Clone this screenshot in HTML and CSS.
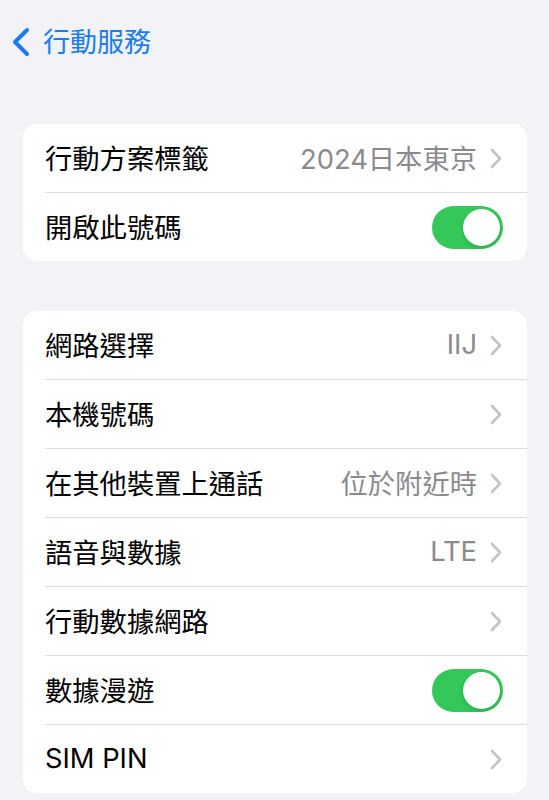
FILE: index.html
```html
<!DOCTYPE html>
<html lang="zh-Hant">
<head>
    <meta charset="UTF-8">
    <title>行動服務</title>
    <link rel="stylesheet" href="styles.css">
</head>
<body>

<div class="nav-bar">
    <a class="back-link" href="#">
        <svg class="back-icon" width="20" height="30" viewBox="0 0 20 30">
            <path d="M16 3 L4 15 L16 27" fill="none" stroke="#1a7cf5" stroke-width="4" stroke-linecap="round" stroke-linejoin="round"/>
        </svg>
        <span>行動服務</span>
    </a>
</div>

<div class="group">
    <div class="row">
        <span class="label">行動方案標籤</span>
        <span class="value">2024日本東京</span>
        <svg class="chevron" width="12" height="21" viewBox="0 0 12 21"><path d="M2 2 L10 10.5 L2 19" fill="none" stroke="#c4c4c7" stroke-width="2.6" stroke-linecap="round" stroke-linejoin="round"/></svg>
    </div>
    <div class="row">
        <span class="label">開啟此號碼</span>
        <span class="toggle on"><span class="knob"></span></span>
    </div>
</div>

<div class="group">
    <div class="row">
        <span class="label">網路選擇</span>
        <span class="value">IIJ</span>
        <svg class="chevron" width="12" height="21" viewBox="0 0 12 21"><path d="M2 2 L10 10.5 L2 19" fill="none" stroke="#c4c4c7" stroke-width="2.6" stroke-linecap="round" stroke-linejoin="round"/></svg>
    </div>
    <div class="row">
        <span class="label">本機號碼</span>
        <span class="value"></span>
        <svg class="chevron" width="12" height="21" viewBox="0 0 12 21"><path d="M2 2 L10 10.5 L2 19" fill="none" stroke="#c4c4c7" stroke-width="2.6" stroke-linecap="round" stroke-linejoin="round"/></svg>
    </div>
    <div class="row">
        <span class="label">在其他裝置上通話</span>
        <span class="value">位於附近時</span>
        <svg class="chevron" width="12" height="21" viewBox="0 0 12 21"><path d="M2 2 L10 10.5 L2 19" fill="none" stroke="#c4c4c7" stroke-width="2.6" stroke-linecap="round" stroke-linejoin="round"/></svg>
    </div>
    <div class="row">
        <span class="label">語音與數據</span>
        <span class="value">LTE</span>
        <svg class="chevron" width="12" height="21" viewBox="0 0 12 21"><path d="M2 2 L10 10.5 L2 19" fill="none" stroke="#c4c4c7" stroke-width="2.6" stroke-linecap="round" stroke-linejoin="round"/></svg>
    </div>
    <div class="row">
        <span class="label">行動數據網路</span>
        <span class="value"></span>
        <svg class="chevron" width="12" height="21" viewBox="0 0 12 21"><path d="M2 2 L10 10.5 L2 19" fill="none" stroke="#c4c4c7" stroke-width="2.6" stroke-linecap="round" stroke-linejoin="round"/></svg>
    </div>
    <div class="row">
        <span class="label">數據漫遊</span>
        <span class="toggle on"><span class="knob"></span></span>
    </div>
    <div class="row">
        <span class="label">SIM PIN</span>
        <span class="value"></span>
        <svg class="chevron" width="12" height="21" viewBox="0 0 12 21"><path d="M2 2 L10 10.5 L2 19" fill="none" stroke="#c4c4c7" stroke-width="2.6" stroke-linecap="round" stroke-linejoin="round"/></svg>
    </div>
</div>

</body>
</html>
```

FILE: styles.css
```css
body {
    margin: 0;
    padding: 0 22px 0 23px;
    background-color: #f2f2f7;
    font-family: Inter, "Noto Sans CJK TC", sans-serif;
    color: #000;
}
.nav-bar {
    height: 84px;
    display: flex;
    align-items: center;
    margin-left: -12px;
}
.back-link {
    display: flex;
    align-items: center;
    gap: 12px;
    color: #1a7cf5;
    text-decoration: none;
    font-size: 27px;
    line-height: 1;
}
.group {
    background-color: white;
    border-radius: 14px;
    margin-top: 40px;
    overflow: hidden;
}
.group + .group {
    margin-top: 50px;
}
.row {
    height: 69px;
    display: flex;
    align-items: center;
    margin-left: 22px;
    padding-right: 25px;
    padding-bottom: 2px;
    font-size: 27.3px;
    border-top: 1px solid #dcdce0;
    box-sizing: border-box;
}
.row:first-child {
    border-top: none;
    height: 68px;
}
.label {
    flex: 1;
}
.value {
    color: #8a8a8e;
    margin-right: 13px;
}
.chevron {
    display: block;
    margin-top: 2px;
}
.toggle {
    width: 71px;
    height: 43px;
    border-radius: 22px;
    background-color: #34c759;
    display: flex;
    align-items: center;
    justify-content: flex-end;
    padding: 0 3px;
    box-sizing: border-box;
    margin-right: -1px;
    margin-top: 2px;
}
.knob {
    width: 37px;
    height: 37px;
    border-radius: 50%;
    background-color: white;
    box-shadow: 0 2px 4px rgba(0, 0, 0, 0.15);
}
```
